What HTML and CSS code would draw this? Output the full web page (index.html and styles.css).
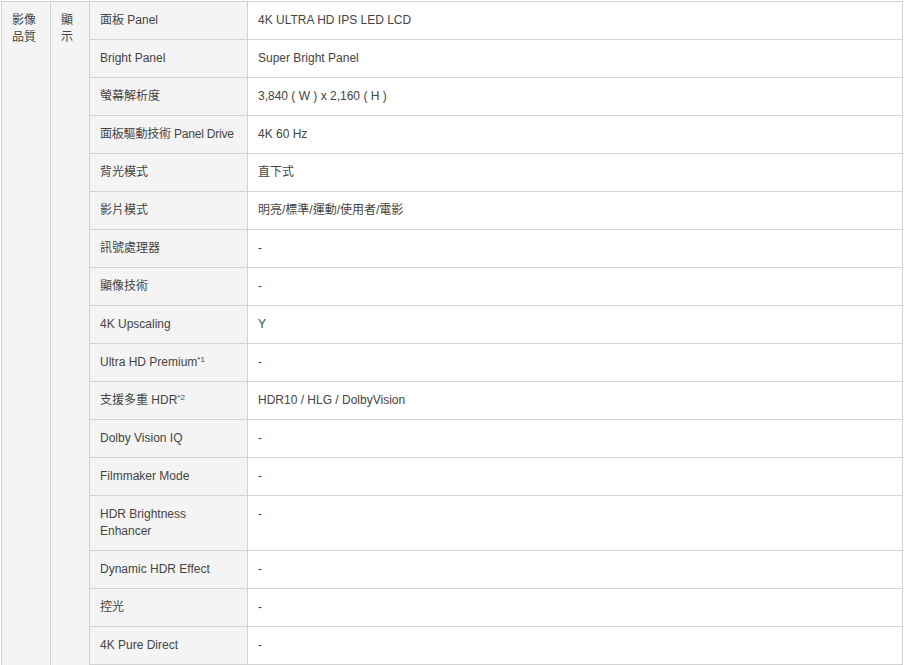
FILE: index.html
```html
<!DOCTYPE html>
<html lang="zh-Hant">
<head>
<meta charset="utf-8">
<title>規格</title>
<link rel="stylesheet" href="styles.css">
</head>
<body>
<div class="wrap">
<table class="spec">
  <colgroup>
    <col class="c1"><col class="c2"><col class="c3"><col class="c4">
  </colgroup>
  <tbody>
    <tr>
      <td class="group" rowspan="17">影像品質</td>
      <td class="sub" rowspan="17">顯示</td>
      <td class="label">面板 Panel</td>
      <td class="value">4K ULTRA HD IPS LED LCD</td>
    </tr>
    <tr><td class="label">Bright Panel</td><td class="value">Super Bright Panel</td></tr>
    <tr><td class="label">螢幕解析度</td><td class="value">3,840 ( W ) x 2,160 ( H )</td></tr>
    <tr><td class="label nowrap">面板驅動技術 Panel Drive</td><td class="value">4K 60 Hz</td></tr>
    <tr><td class="label">背光模式</td><td class="value">直下式</td></tr>
    <tr><td class="label">影片模式</td><td class="value">明亮/標準/運動/使用者/電影</td></tr>
    <tr><td class="label">訊號處理器</td><td class="value">-</td></tr>
    <tr><td class="label">顯像技術</td><td class="value">-</td></tr>
    <tr><td class="label">4K Upscaling</td><td class="value">Y</td></tr>
    <tr><td class="label">Ultra HD Premium<sup>*1</sup></td><td class="value">-</td></tr>
    <tr><td class="label">支援多重 HDR<sup>*2</sup></td><td class="value">HDR10 / HLG / DolbyVision</td></tr>
    <tr><td class="label">Dolby Vision IQ</td><td class="value">-</td></tr>
    <tr><td class="label">Filmmaker Mode</td><td class="value">-</td></tr>
    <tr><td class="label">HDR Brightness Enhancer</td><td class="value">-</td></tr>
    <tr><td class="label">Dynamic HDR Effect</td><td class="value">-</td></tr>
    <tr><td class="label">控光</td><td class="value">-</td></tr>
    <tr><td class="label">4K Pure Direct</td><td class="value">-</td></tr>
  </tbody>
</table>
</div>
</body>
</html>
```

FILE: styles.css
```css
html, body {
  margin: 0;
  padding: 0;
  background: #ffffff;
  overflow: hidden;
}
.wrap {
  padding: 1px 0 0 1px;
}
.spec {
  border-collapse: collapse;
  table-layout: fixed;
  width: 902px;
  font-family: "Liberation Sans", Arial, "Noto Sans CJK TC", sans-serif;
  font-size: 12px;
  line-height: 17px;
  color: #444444;
}
.c1 { width: 49px; }
.c2 { width: 39px; }
.c3 { width: 158px; }
.c4 { width: auto; }
.spec td {
  border: 1px solid #d2d2d2;
  padding: 10px 10px;
  vertical-align: top;
  text-align: left;
}
.spec td.group,
.spec td.sub {
  background: #f4f4f4;
  border-bottom: none;
  word-break: break-all;
}
.spec td.label {
  background: #f4f4f4;
}
.spec td.nowrap {
  white-space: nowrap;
  letter-spacing: -0.2px;
}
.spec td.value {
  background: #ffffff;
}
.spec sup {
  font-size: 8px;
  line-height: 0;
  vertical-align: 4px;
}
```
